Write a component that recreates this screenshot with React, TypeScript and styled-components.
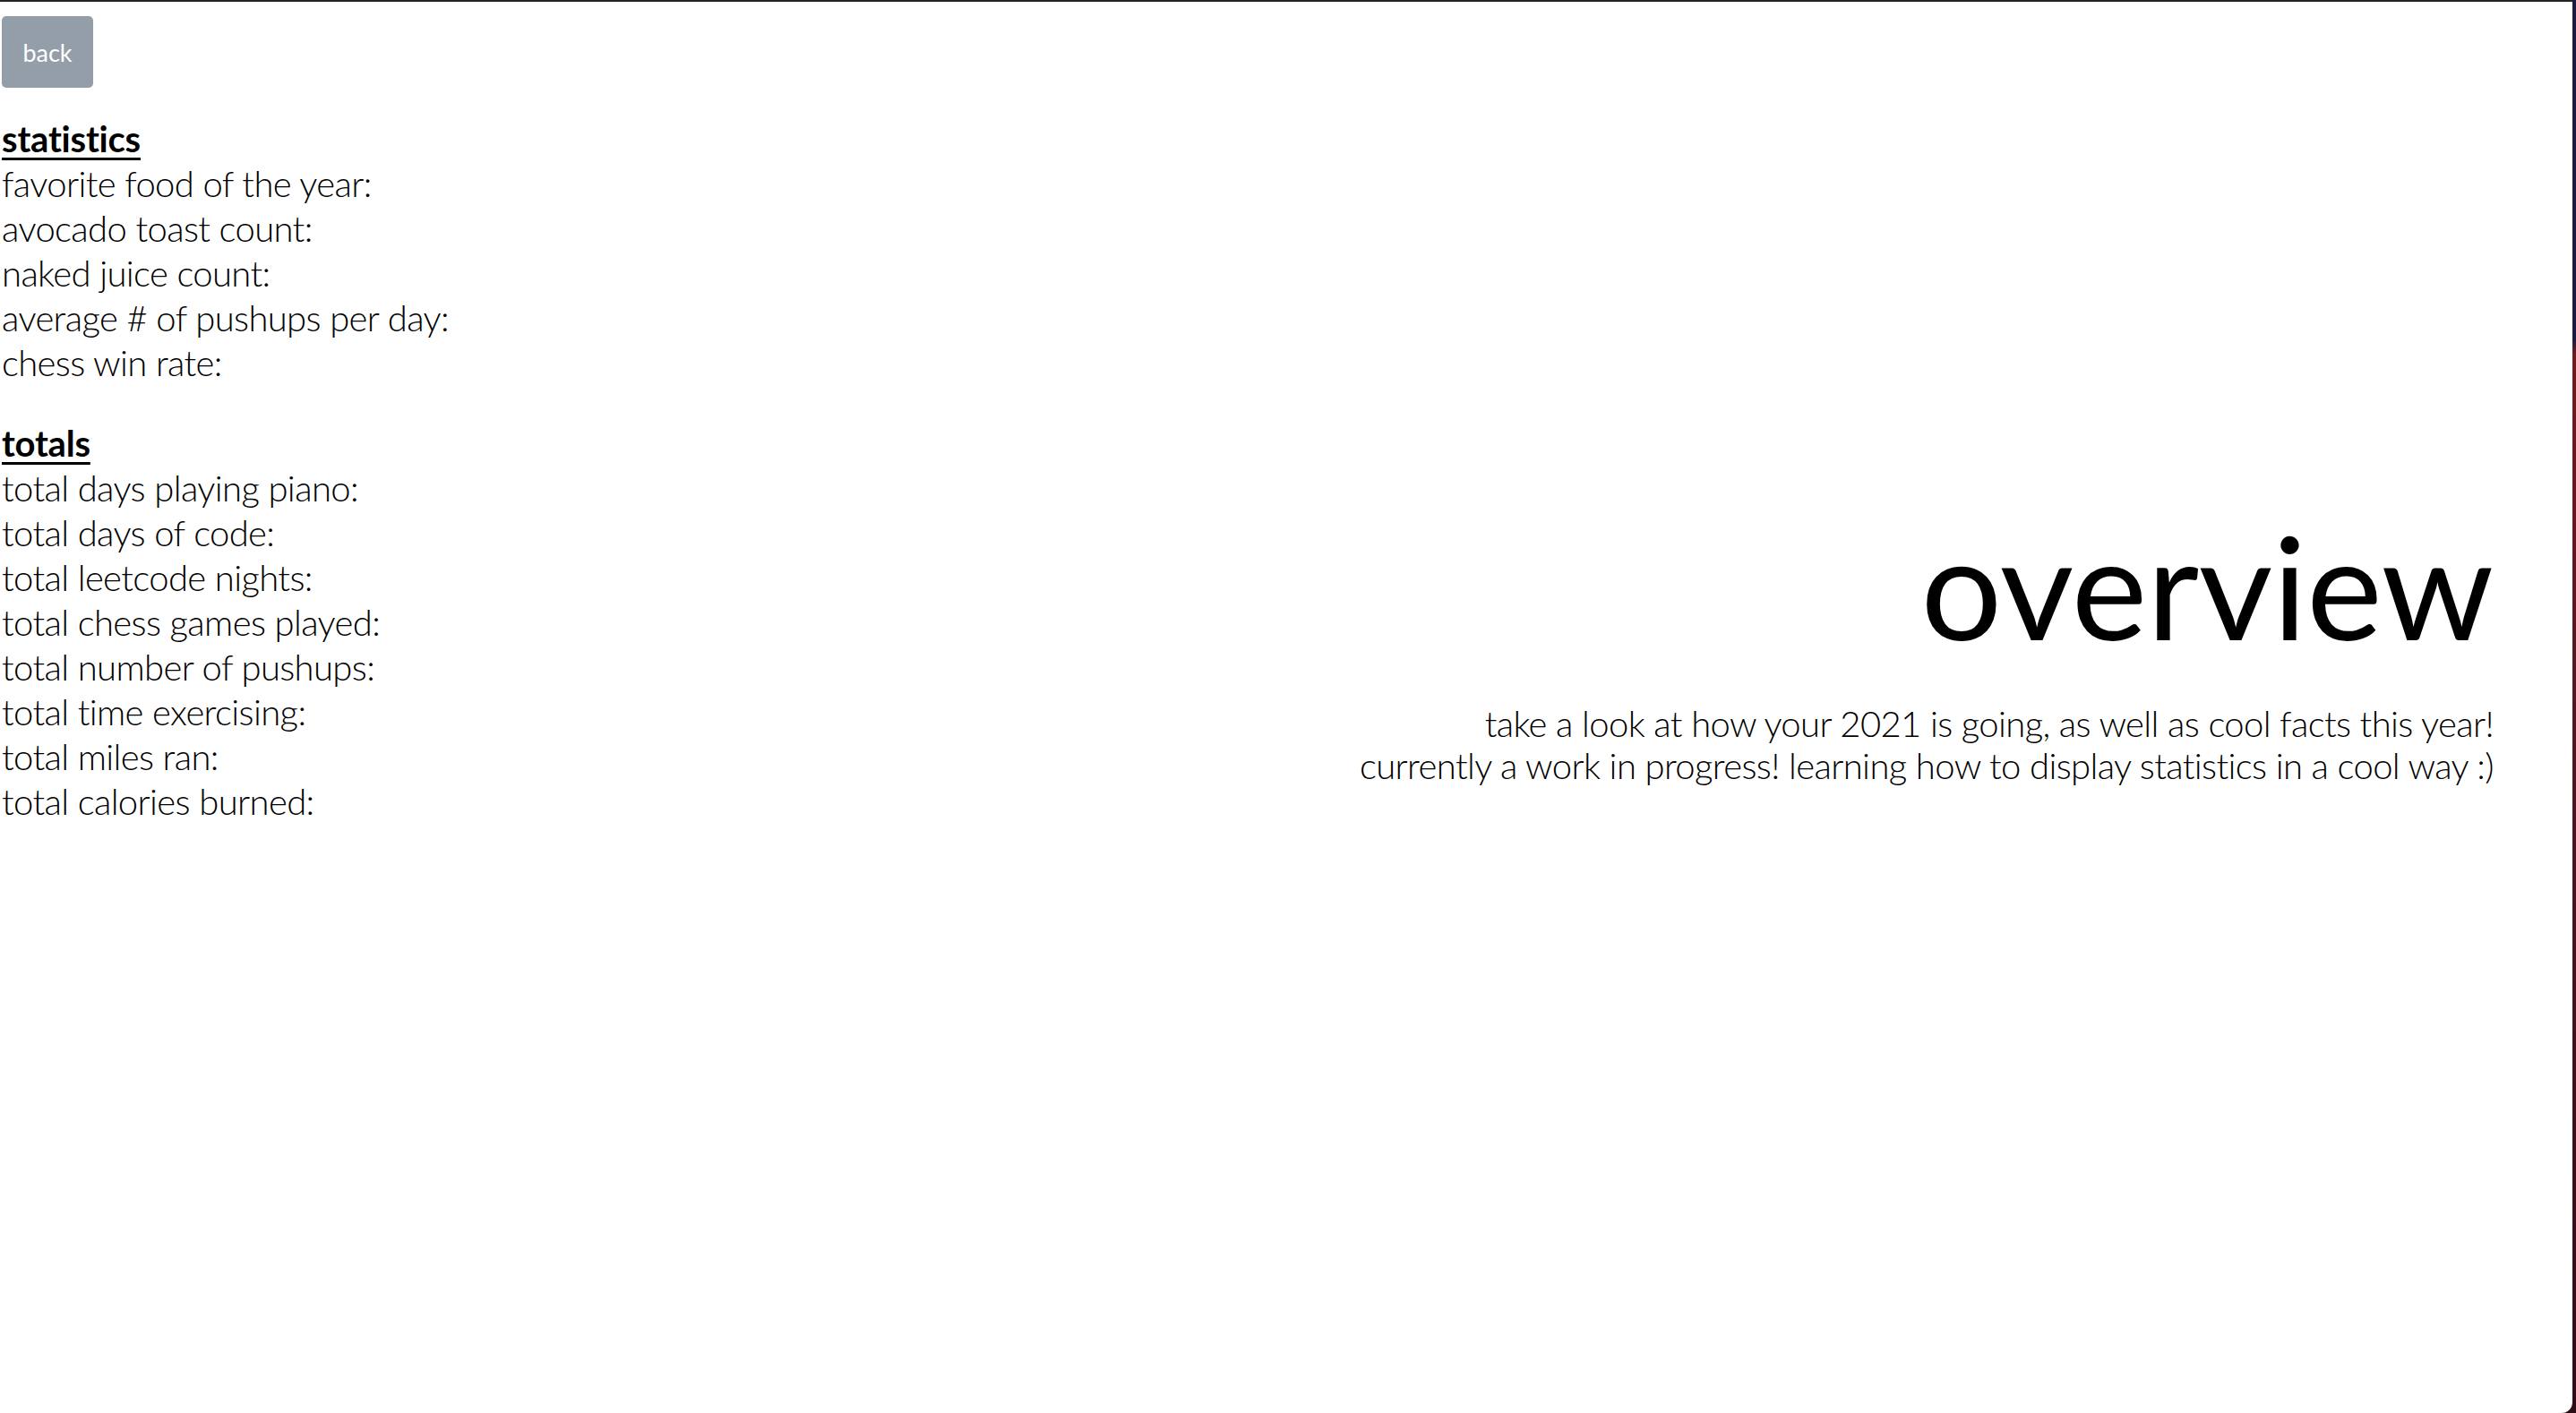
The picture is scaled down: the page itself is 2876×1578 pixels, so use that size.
import React from "react";
import styled, { createGlobalStyle } from "styled-components";

const GlobalStyle = createGlobalStyle`
  html, body {
    margin: 0;
    padding: 0;
  }
  body {
    background: linear-gradient(
      to bottom,
      #1b1b3f 0%,
      #1b1b3f 24%,
      #6b1d20 25%,
      #4a1420 60%,
      #2e0c16 100%
    );
    font-family: "Lato", "Noto Sans", sans-serif;
    font-variant-ligatures: none;
    color: #000;
  }
`;

const Page = styled.div`
  box-sizing: border-box;
  min-height: 100vh;
  margin-right: 4px;
  background: #fff;
  border-top: 2px solid #242424;
  border-bottom-right-radius: 12px;
  padding: 16px 0 0 2px;
  display: flex;
  flex-direction: column;
`;

const BackButton = styled.button`
  align-self: flex-start;
  width: 102px;
  height: 80px;
  padding: 0;
  border: none;
  border-radius: 5px;
  background: #949ea9;
  color: #fff;
  font-family: "Lato", sans-serif;
  font-variant-ligatures: none;
  font-weight: 400;
  font-size: 27px;
  cursor: pointer;
`;

const Main = styled.main`
  display: flex;
  align-items: flex-start;
`;

const StatsColumn = styled.div`
  padding-top: 32px;
  display: flex;
  flex-direction: column;
  gap: 40px;
`;

const Section = styled.section`
  display: flex;
  flex-direction: column;
`;

const SectionTitle = styled.h3`
  margin: 0;
  align-self: flex-start;
  font-size: 40px;
  font-weight: 700;
  line-height: 50px;
  letter-spacing: -0.2px;
  text-decoration: underline;
  text-decoration-thickness: 3px;
  text-underline-offset: 6px;
`;

const StatLine = styled.div`
  font-size: 40px;
  font-weight: 300;
  line-height: 50px;
  letter-spacing: -0.62px;
  white-space: nowrap;
`;

const Overview = styled.div`
  flex: 1;
  margin-top: 459px;
  padding-right: 88px;
  text-align: right;
`;

const Title = styled.h1`
  margin: 0 0 36px;
  font-size: 160px;
  font-weight: 400;
  line-height: 192px;
  letter-spacing: -0.3px;
`;

const Subtitle = styled.p`
  margin: 0;
  font-size: 40px;
  font-weight: 300;
  line-height: 47px;
  letter-spacing: -0.62px;
`;

const statistics = [
  "favorite food of the year:",
  "avocado toast count:",
  "naked juice count:",
  "average # of pushups per day:",
  "chess win rate:",
];

const totals = [
  "total days playing piano:",
  "total days of code:",
  "total leetcode nights:",
  "total chess games played:",
  "total number of pushups:",
  "total time exercising:",
  "total miles ran:",
  "total calories burned:",
];

export default function App() {
  return (
    <>
      <GlobalStyle />
      <Page>
        <BackButton>back</BackButton>
        <Main>
          <StatsColumn>
            <Section>
              <SectionTitle>statistics</SectionTitle>
              {statistics.map((s) => (
                <StatLine key={s}>{s}</StatLine>
              ))}
            </Section>
            <Section>
              <SectionTitle>totals</SectionTitle>
              {totals.map((s) => (
                <StatLine key={s}>{s}</StatLine>
              ))}
            </Section>
          </StatsColumn>
          <Overview>
            <Title>overview</Title>
            <Subtitle>
              take a look at how your 2021 is going, as well as cool facts this year!
              <br />
              currently a work in progress! learning how to display statistics in a cool way :)
            </Subtitle>
          </Overview>
        </Main>
      </Page>
    </>
  );
}
